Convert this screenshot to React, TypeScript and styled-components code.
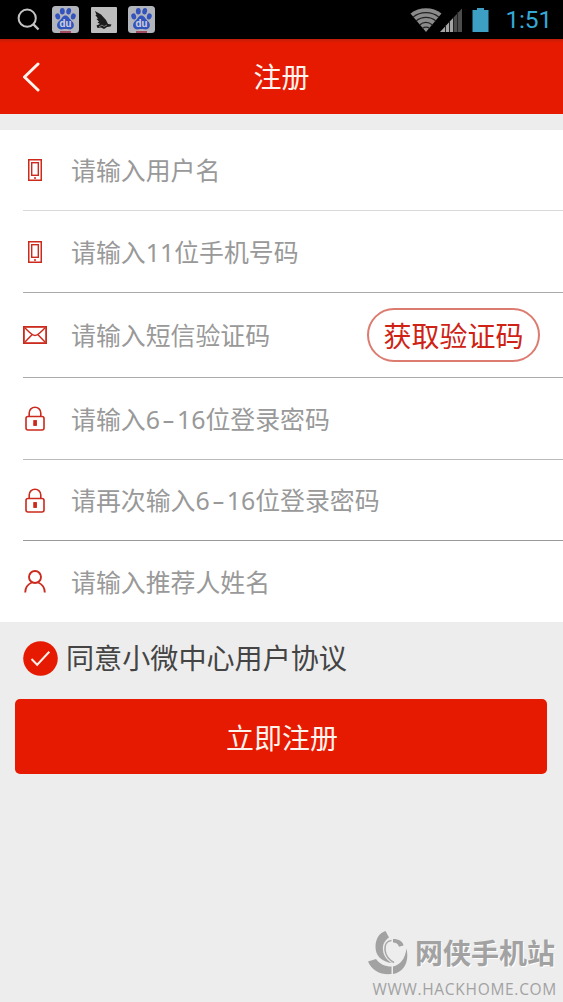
import React from 'react';
import styled, { createGlobalStyle } from 'styled-components';

const RED = '#e61a00';
const ICON_RED = '#cb2a1d';

const GlobalStyle = createGlobalStyle`
  * { box-sizing: border-box; }
  body {
    margin: 0;
    background: #ededed;
    font-family: 'Noto Sans', 'Noto Sans CJK SC', sans-serif;
  }
`;

const Screen = styled.div`
  position: relative;
  display: flex;
  flex-direction: column;
  width: 563px;
  height: 1002px;
  background: #ededed;
  overflow: hidden;
`;

const StatusBar = styled.div`
  display: flex;
  align-items: center;
  justify-content: space-between;
  height: 39px;
  padding: 0 11px 0 17px;
  background: #000;
`;

const StatusGroup = styled.div`
  display: flex;
  align-items: center;
`;

const StatusIcon = styled.svg<{ $gap?: number }>`
  display: block;
  flex: none;
  margin-left: ${(p) => p.$gap ?? 0}px;
`;

const Clock = styled.span`
  margin-left: 17px;
  font-family: Roboto, sans-serif;
  font-size: 24.5px;
  line-height: 38px;
  letter-spacing: -0.2px;
  color: #35a9d6;
  padding-top: 1px;
`;

const Header = styled.header`
  display: grid;
  grid-template-columns: 60px 1fr 60px;
  align-items: center;
  height: 75px;
  background: linear-gradient(#c41c0c 0, ${RED} 4px);
`;

const BackButton = styled.button`
  display: flex;
  padding: 0 0 0 21px;
  border: 0;
  background: none;
`;

const Title = styled.h1`
  margin: 0;
  font-size: 28px;
  line-height: 40px;
  font-weight: 400;
  text-align: center;
  color: #fff3ee;
`;

const Form = styled.form`
  display: flex;
  flex-direction: column;
  margin-top: 16px;
  padding-left: 23px;
  background: #fff;
`;

const Row = styled.div<{ $height: number; $line?: string }>`
  display: flex;
  align-items: center;
  height: ${(p) => p.$height}px;
  padding-right: 23px;
  border-bottom: ${(p) => (p.$line ? `1px solid ${p.$line}` : '0')};
`;

const RowIcon = styled.span`
  display: flex;
  justify-content: center;
  width: 24px;
  margin-right: 24px;
`;

const Placeholder = styled.span`
  flex: 1;
  font-size: 24.9px;
  line-height: 36px;
  white-space: nowrap;
  color: #999;
`;

const Dash = styled.span`
  display: inline-block;
  width: 17px;
  text-align: center;
  transform: scaleX(1.6);
`;

const CodeButton = styled.button`
  width: 173px;
  height: 54px;
  padding: 2px 0 0;
  border: 2px solid #dc7b70;
  border-radius: 27px;
  background: #fff;
  font-family: inherit;
  font-size: 28px;
  line-height: 48px;
  color: #cf2214;
`;

const Agreement = styled.label`
  display: flex;
  align-items: center;
  height: 77px;
  padding: 0 0 4px 23px;
  font-size: 28.1px;
  color: #444;
`;

const AgreementText = styled.span`
  margin-left: 8px;
  padding-bottom: 2px;
  line-height: 40px;
`;

const Submit = styled.button`
  height: 75px;
  margin: 0 16px 0 15px;
  padding: 0 0 0 2px;
  border: 0;
  border-radius: 5px;
  background: ${RED};
  font-family: inherit;
  font-size: 28px;
  color: #fff3ee;
`;

const Watermark = styled.footer`
  display: flex;
  flex-direction: column;
  align-items: flex-end;
  margin-top: auto;
  padding: 0 7px 3px 0;
  color: #a2a2a2;
`;

const Brand = styled.div`
  display: flex;
  align-items: center;
  margin-right: 1px;
  padding-bottom: 4px;
`;

const BrandName = styled.span`
  margin-left: 6px;
  font-size: 28px;
  line-height: 44px;
  font-weight: 700;
  text-shadow: 1px 1px 0 #fff;
`;

const Url = styled.span`
  font-family: 'Open Sans', sans-serif;
  font-size: 15.5px;
  line-height: 20px;
  font-weight: 500;
  letter-spacing: 0.7px;
  margin-right: -1px;
`;

const SearchIcon = () => (
  <StatusIcon width="23" height="23" viewBox="0 0 23 23" fill="none" stroke="#c4c4c4" strokeWidth="2">
    <circle cx="10.2" cy="10.2" r="8.6" />
    <path d="M16.2 16.2 21.5 21.5" strokeWidth="2.4" />
  </StatusIcon>
);

const PawIcon = ({ gap }: { gap: number }) => (
  <StatusIcon $gap={gap} width="27" height="27" viewBox="0 0 27 27">
    <rect width="27" height="27" rx="3.5" fill="#b3b5bc" />
    <g fill="#3353bd">
      <ellipse cx="5.7" cy="10.4" rx="2.4" ry="3.1" transform="rotate(-15 5.7 10.4)" />
      <ellipse cx="10.3" cy="5.2" rx="2.4" ry="3.3" />
      <ellipse cx="16.7" cy="5.2" rx="2.4" ry="3.3" transform="rotate(10 16.7 5.2)" />
      <ellipse cx="21.3" cy="10.4" rx="2.4" ry="3.1" transform="rotate(15 21.3 10.4)" />
      <path d="M13.400 9.500c2.700 0 3.600 2.600 5.200 4.300 1.900 1.900 3.700 3.500 3.200 6.200-.4 2.800-3.100 3.800-5.600 3.300-2-.4-3.500-.4-5.500 0-2.500.5-5.200-.6-5.600-3.300-.4-2.700 1.500-4.400 3.300-6.200C10 12.200 10.700 9.500 13.400 9.500z" />
    </g>
    <text x="13.500" y="21.200" textAnchor="middle" fontFamily="Roboto, sans-serif" fontSize="10.500" fontWeight="700" fill="#c9cddb">du</text>
    <rect x="8" y="25" width="11" height="2" fill="#a44a60" />
  </StatusIcon>
);

const WingIcon = () => (
  <StatusIcon $gap={11.5} width="26" height="26" viewBox="0 0 26 26">
    <rect width="26" height="26" rx="1" fill="#bdbdbd" />
    <path d="M4 4 10 7.500 15 13 17 17 20.500 17.500 19.500 19.500 16 20 13 22 10 20.500 6.500 21 5.500 18.500 9 17 6.500 15.500 8 14.500 5.500 12 7 11.500 4.300 8 5.500 8z" fill="#1c1c1c" />
    <path d="m8 20 3-2 2 1.500 3-1.500" fill="none" stroke="#777" />
  </StatusIcon>
);

const WifiIcon = () => (
  <StatusIcon width="32" height="24" viewBox="0 0 32 24">
    <path d="M.5 5.500C9-1.500 23-1.500 31.500 5.500L16 24z" fill="#8b8b8b" />
    <g fill="none" stroke="#222" strokeWidth="1.200">
      <path d="M3 9.200C10.500 3.200 21.500 3.200 29 9.200" />
      <path d="M6 13C12 8.200 20 8.200 26 13" />
      <path d="M9.500 17C13.500 13.800 18.500 13.800 22.500 17" />
      <path d="M12.300 20.500C14.500 18.900 17.500 18.900 19.700 20.500" />
    </g>
  </StatusIcon>
);

const SignalIcon = () => (
  <StatusIcon $gap={-2} width="23" height="25" viewBox="0 0 23 25">
    <path d="M0 25 14 10V25z" fill="#a5a5a5" />
    <path d="M14 10 22 1.500V25h-8z" fill="#4c4c4c" />
    <path d="M5.500 18v7M9.500 14v11M13.500 10v15M17.500 5v20" stroke="#222" strokeWidth="1" />
  </StatusIcon>
);

const BatteryIcon = () => (
  <StatusIcon $gap={9} width="17" height="24" viewBox="0 0 17 24">
    <path d="M5 0h7v2h4.500v22H.5V2H5z" fill="#3d9fc4" />
  </StatusIcon>
);

const PhoneIcon = () => (
  <svg width="14" height="22" viewBox="0 0 14 22" fill="none" stroke={ICON_RED}>
    <rect x=".75" y=".75" width="12.500" height="20.500" strokeWidth="1.500" />
    <rect x="3.700" y="3.700" width="6.600" height="12.600" strokeWidth="1.400" />
    <path d="M6 19h2" strokeWidth="1.600" />
  </svg>
);

const MailIcon = () => (
  <svg width="24" height="18" viewBox="0 0 24 18" fill="none" stroke={ICON_RED} strokeWidth="1.500">
    <rect x=".9" y=".9" width="22.200" height="16.200" strokeWidth="1.800" />
    <path d="M2 2c3.500 3.300 7 7.500 10 7.500S18.500 5.300 22 2M2 16l7-7.200M22 16l-7-7.200" />
  </svg>
);

const LockIcon = () => (
  <svg width="20" height="25" viewBox="0 0 20 25" fill="none" stroke={ICON_RED} strokeWidth="1.600">
    <rect x="1" y="10.500" width="18" height="13.500" rx="2" />
    <path d="M4.200 10.500V7a5.800 5.800 0 0 1 11.600 0v3.500" />
    <rect x="8.800" y="14.600" width="2.600" height="4.800" fill={ICON_RED} strokeWidth="1" />
  </svg>
);

const PersonIcon = () => (
  <svg width="22" height="23" viewBox="0 0 22 23" fill="none" stroke={ICON_RED} strokeWidth="1.900">
    <circle cx="11" cy="7" r="6" />
    <path d="M1.200 22.500c0-5.200 2.800-8.300 6.600-10M20.800 22.500c0-5.200-2.800-8.300-6.600-10" />
  </svg>
);

const BackIcon = () => (
  <svg width="19" height="30" viewBox="0 0 19 30" fill="none" stroke="#fff3ee" strokeWidth="3">
    <path d="M17 2 3.500 15 17 28" strokeLinecap="round" strokeLinejoin="round" />
  </svg>
);

const CheckIcon = () => (
  <svg width="35" height="35" viewBox="0 0 35 35">
    <circle cx="17.500" cy="17.500" r="17.300" fill={RED} />
    <path d="m8.500 18 5.700 5.700L26.300 10.700" fill="none" stroke="#fff0ea" strokeWidth="2" />
  </svg>
);

const BrandLogo = () => (
  <svg width="41" height="44" viewBox="0 0 41 44">
    <g fill="#a2a2a2">
      <path d="M17.500 0 21 6.500C16 10 14.500 14 15 19c.5 6 4 10.500 9 13-10-1-16.500-7-16.500-16C7.500 8 11 2 17.500 0z" />
      <path d="M0 30.500 8 28C11.500 33 17 35.500 23.500 35.500V43C13 44 4 40 0 30.500z" />
      <path d="M25 35.500c7-1.500 12-7 13.500-18C41.500 31 36 41 25 43z" />
      <path d="M25 8c6 0 10 2.500 10.500 6.500l-4.500 1.200C30 12.500 28 11.500 25 11.500z" />
    </g>
    <path d="M23.500 9.500C18.500 10 16.500 14 17 19c.5 5 3.500 9.500 9 12.500" fill="none" stroke="#a8a8a8" strokeWidth="1.600" />
  </svg>
);

const fields = [
  { Icon: PhoneIcon, text: '请输入用户名', height: 81, line: '#d9d9d9' },
  { Icon: PhoneIcon, text: '请输入11位手机号码', height: 82, line: '#aaa' },
  { Icon: MailIcon, text: '请输入短信验证码', height: 85, line: '#aaa', code: true },
  { Icon: LockIcon, text: '请输入6-16位登录密码', height: 82, line: '#bbb' },
  { Icon: LockIcon, text: '请再次输入6-16位登录密码', height: 81, line: '#999' },
  { Icon: PersonIcon, text: '请输入推荐人姓名', height: 81 },
];

const Label = ({ text }: { text: string }) => {
  const [head, tail] = text.split('-');
  return (
    <Placeholder>
      {head}
      {tail && <Dash>-</Dash>}
      {tail}
    </Placeholder>
  );
};

export default function App() {
  return (
    <Screen>
      <GlobalStyle />
      <StatusBar>
        <StatusGroup>
          <SearchIcon />
          <PawIcon gap={12} />
          <WingIcon />
          <PawIcon gap={11} />
        </StatusGroup>
        <StatusGroup>
          <WifiIcon />
          <SignalIcon />
          <BatteryIcon />
          <Clock>1:51</Clock>
        </StatusGroup>
      </StatusBar>
      <Header>
        <BackButton type="button" aria-label="返回">
          <BackIcon />
        </BackButton>
        <Title>注册</Title>
      </Header>
      <Form>
        {fields.map(({ Icon, text, height, line, code }) => (
          <Row key={text} $height={height} $line={line}>
            <RowIcon>
              <Icon />
            </RowIcon>
            <Label text={text} />
            {code && <CodeButton type="button">获取验证码</CodeButton>}
          </Row>
        ))}
      </Form>
      <Agreement>
        <CheckIcon />
        <AgreementText>同意小微中心用户协议</AgreementText>
      </Agreement>
      <Submit type="button">立即注册</Submit>
      <Watermark>
        <Brand>
          <BrandLogo />
          <BrandName>网侠手机站</BrandName>
        </Brand>
        <Url>WWW.HACKHOME.COM</Url>
      </Watermark>
    </Screen>
  );
}
